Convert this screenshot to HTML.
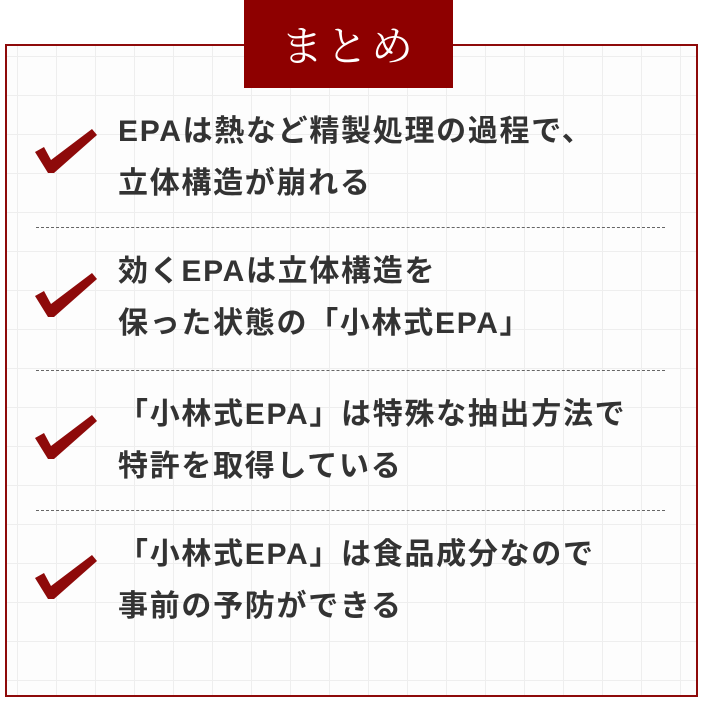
<!DOCTYPE html>
<html><head><meta charset="utf-8"><style>
html,body{margin:0;padding:0;background:#fff;}
body{width:702px;height:704px;position:relative;overflow:hidden;font-family:"Liberation Sans","Noto Sans CJK JP",sans-serif;}
.box{position:absolute;left:5px;top:44px;width:689px;height:649px;border:2px solid #8e0a0a;
background-color:#fdfdfd;
background-image:linear-gradient(#eeeeee 1px,transparent 1px),linear-gradient(90deg,#eeeeee 1px,transparent 1px);
background-size:39px 39px;background-position:10px 10px;}
.title{position:absolute;left:244px;top:0;width:209px;height:88px;background:#8e0000;color:#fff;
font-family:"Noto Serif CJK SC","Noto Serif CJK JP",serif;font-size:42px;text-align:center;line-height:88px;letter-spacing:3px;}
.item{position:absolute;left:118px;font-size:30px;font-weight:bold;color:#333;line-height:52px;white-space:nowrap;letter-spacing:1.7px;}
.hr{position:absolute;left:36px;width:629px;border-top:1px dashed #666;height:0;}
.chk{position:absolute;left:34px;}
</style></head><body>
<div class="box"></div>
<div class="title">まとめ</div>

<svg class="chk" style="top:126px" width="64" height="50" viewBox="0 0 64 50"><polygon points="1,26 10,21 17,34 58,3 63,9 20,47 14,47" fill="#8e0a0a"/></svg>
<div class="item" style="top:106px">EPAは熱など精製処理の過程で、<br>立体構造が崩れる</div>
<div class="hr" style="top:227px"></div>

<svg class="chk" style="top:270px" width="64" height="50" viewBox="0 0 64 50"><polygon points="1,26 10,21 17,34 58,3 63,9 20,47 14,47" fill="#8e0a0a"/></svg>
<div class="item" style="top:246px">効くEPAは立体構造を<br>保った状態の「小林式EPA」</div>
<div class="hr" style="top:370px"></div>

<svg class="chk" style="top:412px" width="64" height="50" viewBox="0 0 64 50"><polygon points="1,26 10,21 17,34 58,3 63,9 20,47 14,47" fill="#8e0a0a"/></svg>
<div class="item" style="top:389px">「小林式EPA」は特殊な抽出方法で<br>特許を取得している</div>
<div class="hr" style="top:510px"></div>

<svg class="chk" style="top:552px" width="64" height="50" viewBox="0 0 64 50"><polygon points="1,26 10,21 17,34 58,3 63,9 20,47 14,47" fill="#8e0a0a"/></svg>
<div class="item" style="top:529px">「小林式EPA」は食品成分なので<br>事前の予防ができる</div>
</body></html>
